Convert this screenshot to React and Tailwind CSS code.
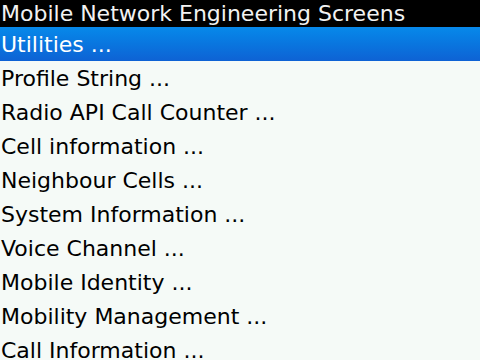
import React from 'react';

const items = [
  'Utilities ...',
  'Profile String ...',
  'Radio API Call Counter ...',
  'Cell information ...',
  'Neighbour Cells ...',
  'System Information ...',
  'Voice Channel ...',
  'Mobile Identity ...',
  'Mobility Management ...',
  'Call Information ...',
];

export default function App() {
  return (
    <div className="w-[480px] h-[360px] overflow-hidden bg-[#f5faf7] font-['DejaVu_Sans',sans-serif] text-[22px]">
      <div className="h-[27px] overflow-hidden bg-black text-[#f2f2f2] pl-[1px] leading-[28px] whitespace-nowrap">
        Mobile Network Engineering Screens
      </div>
      <ul>
        {items.map((label, i) => (
          <li
            key={label}
            className={
              i === 0
                ? 'h-[34px] overflow-hidden leading-[36px] pl-[1px] whitespace-nowrap text-white bg-gradient-to-b from-[#0789ea] to-[#0e62d4]'
                : 'h-[34px] overflow-hidden leading-[36px] pl-[1px] whitespace-nowrap text-black'
            }
          >
            {label}
          </li>
        ))}
      </ul>
    </div>
  );
}
